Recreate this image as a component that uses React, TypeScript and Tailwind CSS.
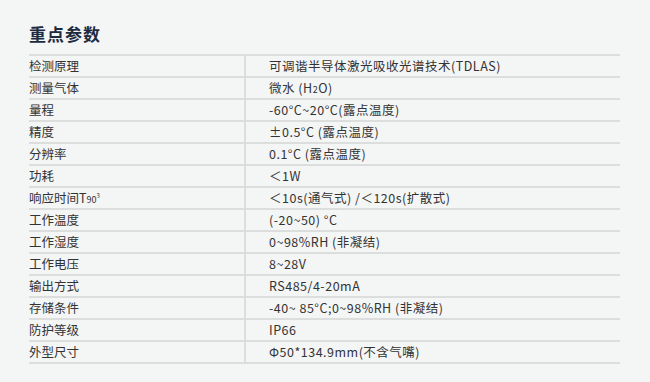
import type { ReactNode } from 'react';

const rows: { label: ReactNode; value: ReactNode }[] = [
  { label: '检测原理', value: '可调谐半导体激光吸收光谱技术(TDLAS)' },
  {
    label: '测量气体',
    value: (
      <>
        微水 (H<span className="text-[9px]">2</span>O)
      </>
    ),
  },
  { label: '量程', value: '-60°C~20°C(露点温度)' },
  { label: '精度', value: '±0.5°C (露点温度)' },
  { label: '分辨率', value: '0.1°C (露点温度)' },
  { label: '功耗', value: '＜1W' },
  {
    label: (
      <>
        响应时间T<span className="text-[9px]">90</span>
        <span className="relative -top-[5px] text-[6px]">3</span>
      </>
    ),
    value: '＜10s(通气式) /＜120s(扩散式)',
  },
  { label: '工作温度', value: '(-20~50) °C' },
  { label: '工作湿度', value: '0~98%RH (非凝结)' },
  { label: '工作电压', value: '8~28V' },
  { label: '输出方式', value: 'RS485/4-20mA' },
  { label: '存储条件', value: '-40~ 85°C;0~98%RH (非凝结)' },
  { label: '防护等级', value: 'IP66' },
  { label: '外型尺寸', value: 'Φ50*134.9mm(不含气嘴)' },
];

export default function App() {
  return (
    <main className="h-[382px] w-[650px] bg-[#f4f5f5] pl-[29px] pt-[22px] font-['Noto_Sans_CJK_SC','Noto_Sans',sans-serif]">
      <h1 className="text-[17px] font-bold leading-[24px] tracking-[1px] text-[#1d2b40]">重点参数</h1>
      <div className="mt-[8px] w-[591px] border-t-2 border-[#dcdddd]">
        {rows.map((row, index) => (
          <div
            key={index}
            className="grid h-[22px] grid-cols-[217px_1fr] border-b-2 border-[#dcdddd] text-[12.5px] leading-[20px] text-[#333]"
          >
            <div className="border-r-2 border-[#dcdddd]">{row.label}</div>
            <div className="pl-[23px] tracking-[0.5px]">{row.value}</div>
          </div>
        ))}
      </div>
    </main>
  );
}
